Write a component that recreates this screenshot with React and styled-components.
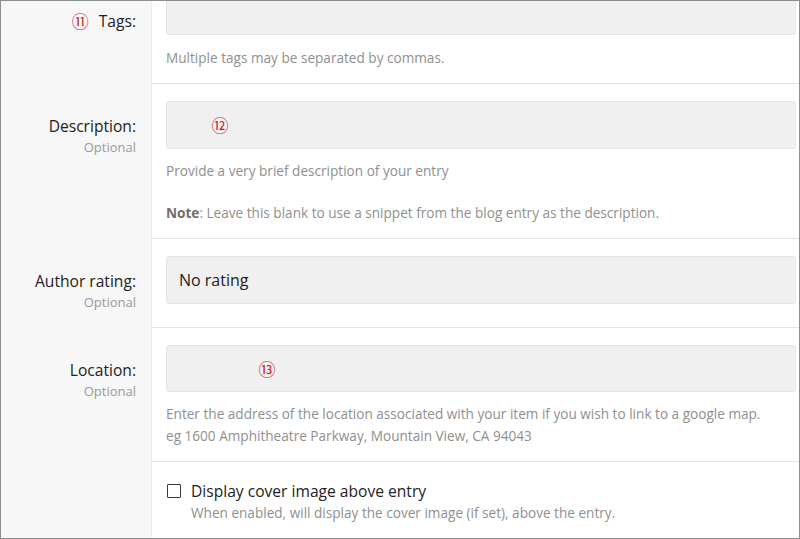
import React from "react";
import styled, { createGlobalStyle } from "styled-components";

const GlobalStyle = createGlobalStyle`
  html, body { margin: 0; padding: 0; background: #fff; }
  body { font-family: "Open Sans", "Noto Sans", "Liberation Sans", sans-serif; }
  * { box-sizing: border-box; }
`;

const Frame = styled.div`
  width: 800px;
  height: 539px;
  border: 1px solid #8e8e8e;
  overflow: hidden;
  background: #fff;
`;

const Form = styled.div`
  margin-top: -22px;
  display: flex;
  flex-direction: column;
`;

const Row = styled.div`
  display: flex;
`;

const LabelCell = styled.div`
  width: 151px;
  flex: none;
  background: #f7f7f7;
  border-right: 1px solid #ececec;
  text-align: right;
  padding: 32px 15px 0 0;
`;

const Label = styled.div`
  font-size: 15.6px;
  line-height: 20px;
  color: #222;
  display: flex;
  justify-content: flex-end;
  align-items: center;
`;

const Optional = styled.div`
  font-size: 13px;
  line-height: 22px;
  color: #9a9a9a;
`;

const ContentCell = styled.div`
  flex: 1;
  min-width: 0;
  padding: ${(p) => p.$top || 17}px 3px 14px 14px;
  border-bottom: 1px solid #e3e3e3;
`;

const Field = styled.div`
  position: relative;
  height: ${(p) => p.$h || 48}px;
  margin-bottom: ${(p) => p.$mb || 0}px;
  background: #f0f0f0;
  border: 1px solid #e5e5e5;
  border-radius: 3px;
  padding: 0 12px;
  display: flex;
  align-items: center;
  font-size: 16px;
  color: #222;
`;

const Help = styled.p`
  margin: ${(p) => p.$mt ?? 11}px 0 0;
  font-size: 13.6px;
  line-height: 22px;
  color: #8f8f8f;
  white-space: nowrap;
  b { color: #6e6e6e; font-weight: 700; }
`;

const Marker = styled.span`
  font-family: "Noto Sans CJK JP", "DejaVu Sans", sans-serif;
  font-size: 17px;
  line-height: 18px;
  color: #cc1f1f;
`;

const InlineMarker = styled(Marker)`
  margin-right: 10px;
`;

const FieldMarker = styled(Marker)`
  position: absolute;
  top: 50%;
  left: ${(p) => p.$x}px;
  transform: translate(-50%, -50%);
`;

const CheckRow = styled.label`
  display: flex;
  align-items: center;
  font-size: 15.6px;
  line-height: 22px;
  color: #222;
  padding-left: 1px;
`;

const Box = styled.span`
  width: 14px;
  height: 14px;
  border: 1.5px solid #333a44;
  border-radius: 1px;
  margin-right: 10px;
  flex: none;
`;

const CheckHelp = styled(Help)`
  margin: 0;
  padding-left: 25px;
`;

export default function App() {
  return (
    <>
      <GlobalStyle />
      <Frame>
        <Form>
          <Row>
            <LabelCell>
              <Label>
                <InlineMarker>⑪</InlineMarker>Tags:
              </Label>
            </LabelCell>
            <ContentCell>
              <Field $h={39} />
              <Help $mt={12}>Multiple tags may be separated by commas.</Help>
            </ContentCell>
          </Row>
          <Row>
            <LabelCell>
              <Label>Description:</Label>
              <Optional>Optional</Optional>
            </LabelCell>
            <ContentCell>
              <Field>
                <FieldMarker $x={53}>⑫</FieldMarker>
              </Field>
              <Help>Provide a very brief description of your entry</Help>
              <Help $mt={20}>
                <b>Note</b>: Leave this blank to use a snippet from the blog entry as the description.
              </Help>
            </ContentCell>
          </Row>
          <Row>
            <LabelCell>
              <Label>Author rating:</Label>
              <Optional>Optional</Optional>
            </LabelCell>
            <ContentCell>
              <Field $mb={9}>No rating</Field>
            </ContentCell>
          </Row>
          <Row>
            <LabelCell>
              <Label>Location:</Label>
              <Optional>Optional</Optional>
            </LabelCell>
            <ContentCell>
              <Field $h={47}>
                <FieldMarker $x={100}>⑬</FieldMarker>
              </Field>
              <Help>
                Enter the address of the location associated with your item if you wish to link to a google map.
                <br />
                eg 1600 Amphitheatre Parkway, Mountain View, CA 94043
              </Help>
            </ContentCell>
          </Row>
          <Row>
            <LabelCell />
            <ContentCell $top={18}>
              <CheckRow>
                <Box />
                Display cover image above entry
              </CheckRow>
              <CheckHelp>When enabled, will display the cover image (if set), above the entry.</CheckHelp>
            </ContentCell>
          </Row>
        </Form>
      </Frame>
    </>
  );
}
